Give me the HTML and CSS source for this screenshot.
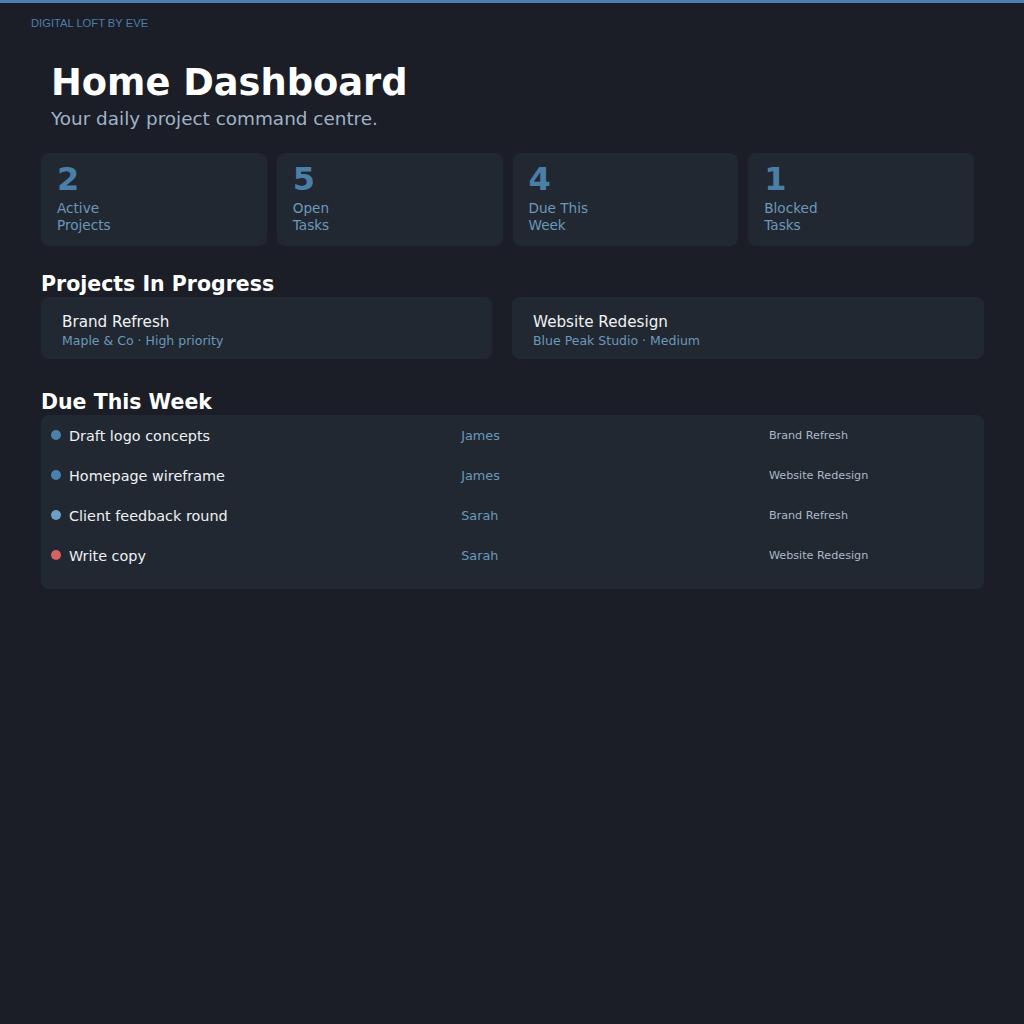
FILE: index.html
```html
<!DOCTYPE html>
<html lang="en">
<head>
<meta charset="utf-8">
<title>Home Dashboard</title>
<link rel="stylesheet" href="styles.css">
</head>
<body>
<div class="topbar"></div>
<div class="page">
  <div class="brand">DIGITAL LOFT BY EVE</div>
  <main class="main">
    <header class="hero">
      <h1 class="hero-title">Home Dashboard</h1>
      <p class="hero-sub">Your daily project command centre.</p>
    </header>

    <section class="stats">
      <div class="stat"><div class="stat-num">2</div><div class="stat-label">Active Projects</div></div>
      <div class="stat"><div class="stat-num">5</div><div class="stat-label">Open Tasks</div></div>
      <div class="stat"><div class="stat-num">4</div><div class="stat-label">Due This Week</div></div>
      <div class="stat"><div class="stat-num">1</div><div class="stat-label">Blocked Tasks</div></div>
    </section>

    <h2 class="section-title section-first">Projects In Progress</h2>
    <section class="projects">
      <div class="project">
        <div class="project-name">Brand Refresh</div>
        <div class="project-meta">Maple &amp; Co · High priority</div>
      </div>
      <div class="project">
        <div class="project-name">Website Redesign</div>
        <div class="project-meta">Blue Peak Studio · Medium</div>
      </div>
    </section>

    <h2 class="section-title section-due">Due This Week</h2>
    <section class="due">
      <div class="task">
        <div class="task-name"><span class="dot dot-blue"></span>Draft logo concepts</div>
        <div class="task-who">James</div>
        <div class="task-proj">Brand Refresh</div>
      </div>
      <div class="task">
        <div class="task-name"><span class="dot dot-blue"></span>Homepage wireframe</div>
        <div class="task-who">James</div>
        <div class="task-proj">Website Redesign</div>
      </div>
      <div class="task">
        <div class="task-name"><span class="dot dot-light"></span>Client feedback round</div>
        <div class="task-who">Sarah</div>
        <div class="task-proj">Brand Refresh</div>
      </div>
      <div class="task">
        <div class="task-name"><span class="dot dot-red"></span>Write copy</div>
        <div class="task-who">Sarah</div>
        <div class="task-proj">Website Redesign</div>
      </div>
    </section>
  </main>
</div>
</body>
</html>
```
FILE: styles.css
```css
html, body {
  margin: 0;
  padding: 0;
}
body {
  background: #1b1e26;
  color: #e6eaee;
  font-family: "DejaVu Sans", sans-serif;
  min-height: 1024px;
}
.topbar {
  height: 3px;
  background: #4a7fae;
}
.page {
  padding: 0 40px 40px 31px;
}
.brand {
  font-family: "Liberation Sans", Arial, sans-serif;
  font-size: 11.2px;
  color: #4a7fae;
  padding-top: 13.6px;
}
.main {
  padding-left: 10px;
}
.hero {
  padding: 32px 10px 0;
}
.hero-title {
  margin: 0;
  font-size: 36.8px;
  font-weight: bold;
  line-height: normal;
  color: #ffffff;
}
.hero-sub {
  margin: 4.5px 0 0;
  font-size: 18.4px;
  line-height: normal;
  color: #9fb3c6;
}
.stats {
  display: grid;
  grid-template-columns: repeat(4, 1fr);
  column-gap: 10px;
  padding-right: 10px;
  margin-top: 23.6px;
}
.stat {
  background: #222831;
  border-radius: 8px;
  padding: 7px 16px 11.5px;
}
.stat-num {
  font-size: 32px;
  line-height: 38px;
  font-weight: bold;
  color: #4a7fa8;
}
.stat-label {
  margin-top: 2.5px;
  font-size: 13.6px;
  line-height: 17px;
  color: #6b98bb;
  max-width: 70px;
}
.section-title {
  margin: 0 0 1px;
  font-size: 20.5px;
  line-height: normal;
  font-weight: bold;
  color: #ffffff;
}
.section-first {
  margin-top: 26px;
}
.section-due {
  margin-top: 31px;
}
.projects {
  display: grid;
  grid-template-columns: 451fr 472fr;
  column-gap: 20px;
}
.project {
  background: #222831;
  border-radius: 8px;
  padding: 16px 21px 11px;
}
.project-name {
  font-size: 15.2px;
  line-height: normal;
  color: #f0f2f4;
  margin-bottom: 2.5px;
}
.project-meta {
  font-size: 12.5px;
  line-height: normal;
  color: #6b98bb;
}
.due {
  background: #222831;
  border-radius: 8px;
  padding: 0.5px 10px 13.5px;
}
.task {
  display: grid;
  grid-template-columns: 2fr 1.5fr 1fr;
  align-items: center;
  height: 40px;
}
.task-name {
  display: flex;
  align-items: center;
  font-size: 14.4px;
  color: #eef1f4;
}
.dot {
  width: 10px;
  height: 10px;
  border-radius: 50%;
  margin-right: 8px;
  margin-bottom: 2px;
  flex: none;
}
.dot-blue { background: #4a7fae; }
.dot-light { background: #6a9fc6; }
.dot-red { background: #d46464; }
.task-who {
  font-size: 12.8px;
  color: #6a98bd;
}
.task-proj {
  font-size: 11.2px;
  color: #aab9c8;
}
```
